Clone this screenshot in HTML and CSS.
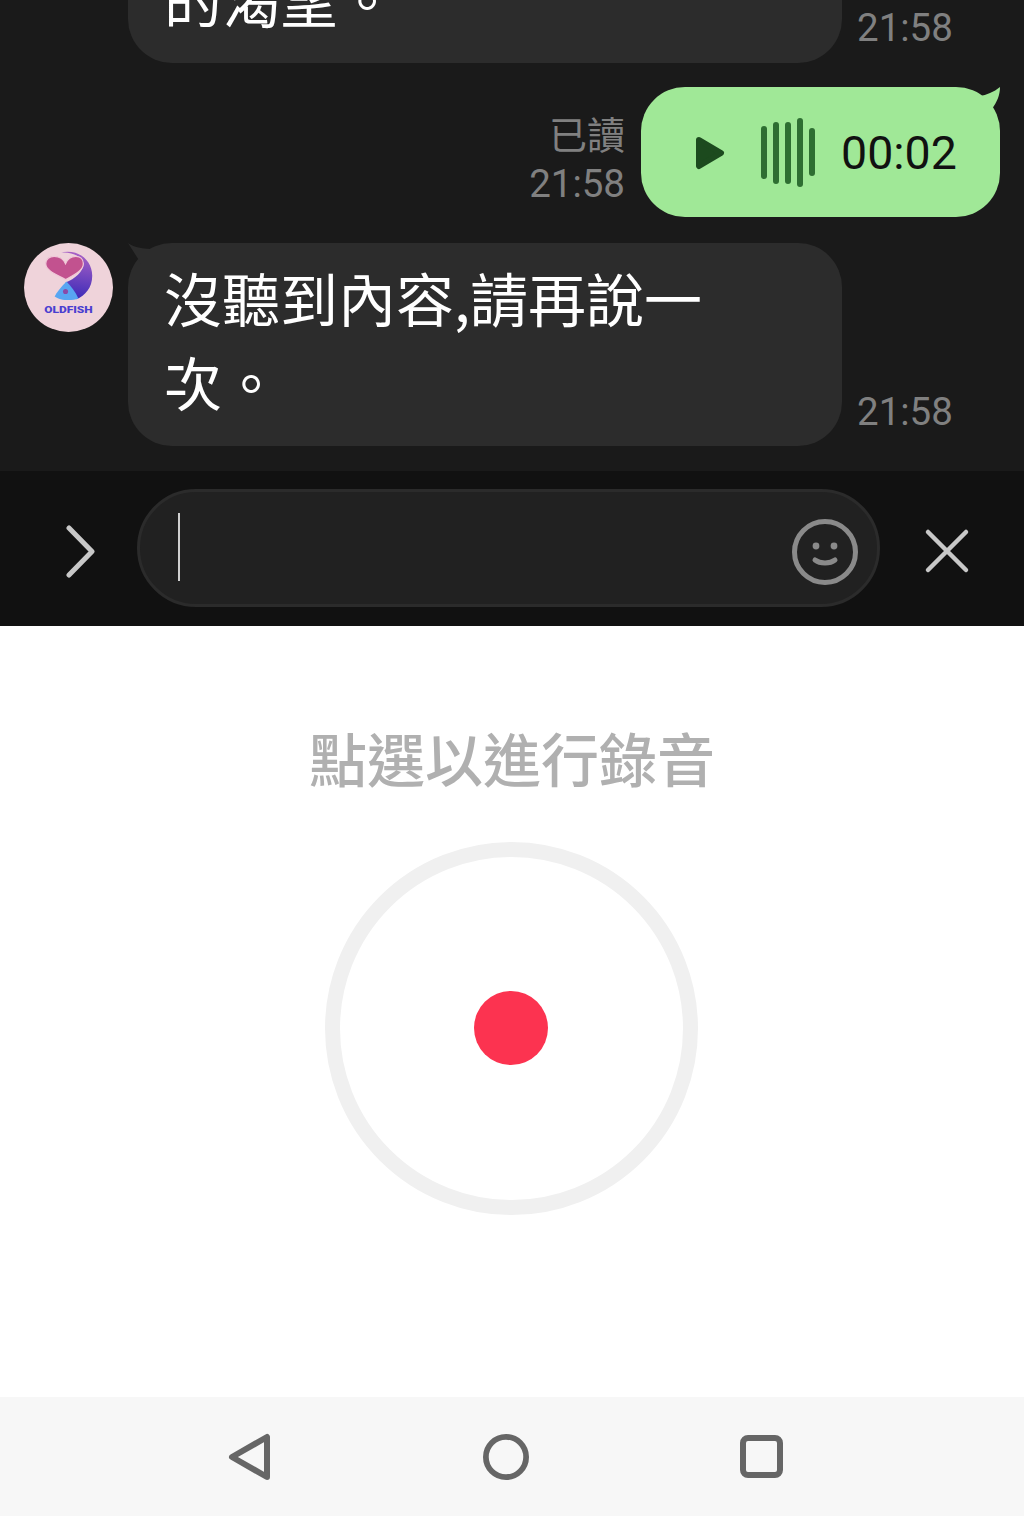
FILE: index.html
```html
<!DOCTYPE html>
<html lang="zh-Hant">
<head>
    <meta charset="UTF-8">
    <meta name="viewport" content="width=device-width, initial-scale=1.0">
    <title>聊天室</title>
    <link rel="stylesheet" href="styles.css">
</head>
<body>
    <!-- Chat history -->
    <main class="chat">
        <div class="row row-in row-top">
            <div class="bubble bubble-in">
                <p class="bubble-text">的渴望。</p>
            </div>
            <time class="stamp">21:58</time>
        </div>

        <div class="row row-out">
            <div class="meta">
                <span class="stamp stamp-read">已讀</span>
                <time class="stamp">21:58</time>
            </div>
            <div class="bubble bubble-out">
                <svg class="tail-out" viewBox="0 0 28 30" aria-hidden="true">
                    <path d="M0 6 L8 9 C14 8 22 5 28 0 C28 8 25 15 20 22 L10 22 Z" />
                </svg>
                <svg class="play-icon" viewBox="0 0 30 34" aria-hidden="true">
                    <path d="M4 4 L26 17 L4 30 Z" />
                </svg>
                <svg class="wave-icon" viewBox="0 0 54 70" aria-hidden="true">
                    <rect x="0" y="8" width="6" height="53" rx="3" />
                    <rect x="12" y="4" width="6" height="62" rx="3" />
                    <rect x="24" y="4" width="6" height="62" rx="3" />
                    <rect x="36" y="0" width="6" height="69" rx="3" />
                    <rect x="48" y="10" width="6" height="48" rx="3" />
                </svg>
                <span class="duration">00:02</span>
            </div>
        </div>

        <div class="row row-in">
            <svg class="avatar" viewBox="0 0 90 90" aria-label="OLDFISH">
                <defs>
                    <linearGradient id="fishBody" x1="0.6" y1="0" x2="0.5" y2="1">
                        <stop offset="0" stop-color="#ab62c6" />
                        <stop offset="1" stop-color="#3a2ab8" />
                    </linearGradient>
                </defs>
                <circle cx="45" cy="45" r="45" fill="#efd3da" />
                <path d="M36 10 C54 5 69 17 69 33 C69 45 62 53 53 57 C50 51 46 45 42 40 C52 36 61 28 60 20 C58 13 46 8 36 10 Z" fill="url(#fishBody)" />
                <path d="M43 39 C37 45 33 50 31 54 C36 58 48 59 55 56 C52 50 48 44 43 39 Z" fill="#58a6f2" />
                <circle cx="42" cy="49" r="2.6" fill="#8a4aa8" />
                <path d="M42 37 C33 32 22 28 22 21 C22 11 38 11 42 21 C46 11 60 11 60 21 C60 28 51 32 42 37 Z" fill="#c2528f" stroke="#f0c8d8" stroke-width="1.2" />
                <text class="avatar-label" x="45" y="71" text-anchor="middle" textLength="49" lengthAdjust="spacingAndGlyphs">OLDFISH</text>
            </svg>
            <div class="bubble bubble-in">
                <svg class="tail-in" viewBox="0 0 30 22" aria-hidden="true">
                    <path d="M0 0 C6 4 12 6 30 6 L14 22 Z" />
                </svg>
                <p class="bubble-text">沒聽到內容,請再說一次。</p>
            </div>
            <time class="stamp">21:58</time>
        </div>
    </main>

    <!-- Message input -->
    <div class="composer">
        <svg class="composer-icon chevron" viewBox="0 0 32 54" aria-hidden="true">
            <path d="M4 4 L27 27.5 L4 51" />
        </svg>
        <div class="input-box">
            <span class="caret"></span>
            <svg class="smile" viewBox="0 0 66 66" aria-hidden="true">
                <circle cx="33" cy="33" r="30.5" />
                <circle class="eye" cx="24" cy="27" r="3.4" />
                <circle class="eye" cx="42" cy="27" r="3.4" />
                <path d="M23 41 C28 45 38 45 43 41" />
            </svg>
        </div>
        <svg class="composer-icon cross" viewBox="0 0 46 46" aria-hidden="true">
            <path d="M4 4 L42 42 M42 4 L4 42" />
        </svg>
    </div>

    <!-- Voice recorder -->
    <section class="recorder">
        <h2 class="recorder-hint">點選以進行錄音</h2>
        <button type="button" class="record-button" aria-label="錄音">
            <span class="record-dot"></span>
        </button>
    </section>

    <!-- System navigation -->
    <nav class="nav-bar">
        <svg class="nav-icon" viewBox="0 0 46 48" aria-hidden="true">
            <path d="M40 4 L40 44 L5 24 Z" />
        </svg>
        <svg class="nav-icon" viewBox="0 0 48 48" aria-hidden="true">
            <circle cx="24" cy="24" r="21" />
        </svg>
        <svg class="nav-icon" viewBox="0 0 46 48" aria-hidden="true">
            <rect x="4" y="5" width="37" height="37" rx="5" />
        </svg>
    </nav>
</body>
</html>
```

FILE: styles.css
```css
* {
    box-sizing: border-box;
}

html, body {
    height: 100%;
}

body {
    margin: 0;
    display: flex;
    flex-direction: column;
    height: 1516px;
    overflow: hidden;
    background-color: #fff;
    font-family: Roboto, "Noto Sans CJK TC", sans-serif;
}

/* Chat history */
.chat {
    height: 471px;
    flex: none;
    display: flex;
    flex-direction: column;
    justify-content: flex-end;
    gap: 24px;
    padding: 0 24px 25px;
    overflow: hidden;
    background-color: #1a1a1a;
}

.row {
    display: flex;
    align-items: flex-end;
    flex: none;
}

.row-top {
    padding-left: 104px;
}

.row-out {
    justify-content: flex-end;
    gap: 16px;
    margin-bottom: 2px;
}

.bubble {
    position: relative;
}

.bubble-in {
    width: 714px;
    padding: 12px 36px 23px;
    border-radius: 44px;
    background-color: #2c2c2c;
}

.bubble-text {
    margin: 0;
    color: #fff;
    font-family: "Noto Sans CJK TC", sans-serif;
    font-size: 58px;
    line-height: 84px;
    max-width: 540px;
}

.bubble-out {
    width: 359px;
    height: 130px;
    display: flex;
    align-items: center;
    padding: 2px 0 0 54px;
    border-radius: 44px;
    background-color: #a0e897;
}

.tail-in {
    position: absolute;
    left: 0;
    top: 0;
    width: 30px;
    height: 22px;
    fill: #2c2c2c;
}

.tail-out {
    position: absolute;
    right: 0;
    top: 0;
    width: 28px;
    height: 30px;
    fill: #a0e897;
}

.play-icon {
    width: 30px;
    height: 34px;
    fill: #1c4a1e;
    stroke: #1c4a1e;
    stroke-width: 6;
    stroke-linejoin: round;
}

.wave-icon {
    width: 54px;
    height: 70px;
    margin-left: 36px;
    fill: #2e6e32;
}

.duration {
    margin-left: 26px;
    color: #111;
    font-size: 46.5px;
}

.stamp {
    color: #808080;
    font-size: 38.5px;
    line-height: 46px;
}

.bubble + .stamp {
    margin-left: 15px;
    margin-bottom: 11px;
}

.row-top .bubble + .stamp {
    margin-bottom: 12px;
}

.meta {
    display: flex;
    flex-direction: column;
    align-items: flex-end;
    margin-bottom: 10px;
}

.stamp-read {
    margin-bottom: 2px;
    font-size: 38px;
}

.avatar {
    width: 89px;
    height: 89px;
    margin-right: 15px;
    align-self: flex-start;
    flex: none;
}

.avatar-label {
    font-family: Roboto, sans-serif;
    font-size: 10px;
    font-weight: 900;
    fill: #4a3fd0;
}

/* Message input */
.composer {
    height: 155px;
    flex: none;
    display: flex;
    align-items: center;
    padding-left: 65px;
    background-color: #111;
}

.composer-icon {
    flex: none;
    margin-top: 5px;
    fill: none;
    stroke: #c8c8c8;
    stroke-linecap: round;
    stroke-linejoin: round;
}

.chevron {
    width: 32px;
    height: 54px;
    stroke-width: 5;
}

.cross {
    width: 46px;
    height: 46px;
    margin-left: 44px;
    stroke-width: 4.5;
}

.input-box {
    width: 743px;
    height: 118px;
    margin-left: 40px;
    margin-bottom: 1px;
    display: flex;
    align-items: center;
    justify-content: space-between;
    padding: 0 19px 0 38px;
    border: 3px solid #2b2b2b;
    border-radius: 59px;
    background-color: #212121;
}

.caret {
    width: 2px;
    height: 68px;
    margin-bottom: 2px;
    background-color: #d0d0d0;
}

.smile {
    width: 66px;
    height: 66px;
    margin-top: 7px;
    fill: none;
    stroke: #8a8a8a;
    stroke-width: 5;
    stroke-linecap: round;
}

.smile .eye {
    fill: #8a8a8a;
    stroke: none;
}

/* Voice recorder */
.recorder {
    flex: 1;
    display: flex;
    flex-direction: column;
    align-items: center;
    padding-top: 89px;
}

.recorder-hint {
    margin: 0;
    color: #b0b0b0;
    font-family: "Noto Sans CJK TC", sans-serif;
    font-size: 58px;
    font-weight: 500;
    line-height: 84px;
}

.record-button {
    width: 373px;
    height: 373px;
    margin-top: 43px;
    margin-right: 1px;
    display: flex;
    align-items: center;
    justify-content: center;
    padding: 0;
    border: 15px solid #f0f0f0;
    border-radius: 50%;
    background-color: #fff;
    cursor: pointer;
}

.record-dot {
    width: 74px;
    height: 74px;
    margin: 0 1px 1px 0;
    border-radius: 50%;
    background-color: #fc3350;
}

/* System navigation */
.nav-bar {
    height: 119px;
    flex: none;
    display: flex;
    align-items: center;
    justify-content: center;
    gap: 210px;
    padding-right: 13px;
    background-color: #f7f7f7;
}

.nav-icon {
    width: 46px;
    height: 48px;
    fill: none;
    stroke: #666;
    stroke-width: 6;
    stroke-linejoin: round;
}
```
